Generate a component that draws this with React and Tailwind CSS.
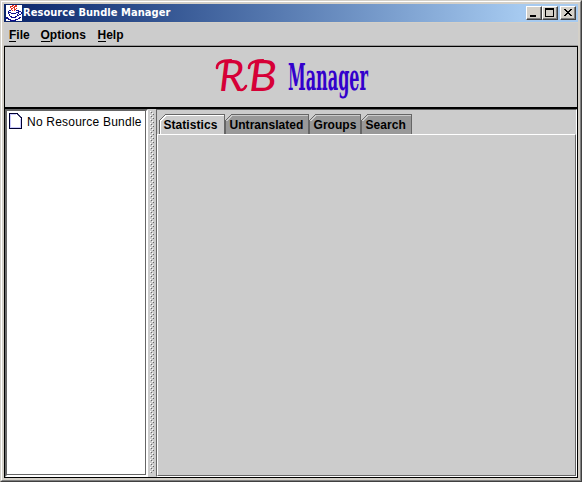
import React from "react";

const CUP = [
  "......rr.rr.....",
  "....rrr.rrr.....",
  "....r..rr.......",
  ".....rr.r.r.....",
  ".....r..rr......",
  "...bb.r.r.bbb...",
  "..b.........bbb.",
  "..bbb.....bbb..b",
  "..b..bbbbb..b..b",
  "...b.......b.bb.",
  "...b.......bb...",
  "....bb...bb.....",
  "bb...bbbbb...bb.",
  "bbb.........bb..",
  "..bbb....bbb....",
  "....bbbbbb......",
];

function CupIcon() {
  return (
    <svg width="16" height="16" shapeRendering="crispEdges" className="block shrink-0 bg-white">
      {CUP.flatMap((row, y) =>
        [...row].map((c, x) =>
          c === "." ? null : (
            <rect key={x + "-" + y} x={x} y={y} width="1" height="1" fill={c === "r" ? "#e03020" : "#10108c"} />
          )
        )
      )}
    </svg>
  );
}

function WinButton({ children }) {
  return (
    <div className="h-[14px] w-4 border border-t-white border-l-white border-r-[#404040] border-b-[#404040] bg-[#d4d0c8]">
      <div className="h-full w-full border-r border-b border-[#808080]">
        <svg width="13" height="11" shapeRendering="crispEdges" className="block" fill="none" stroke="#000">
          {children}
        </svg>
      </div>
    </div>
  );
}

function MenuItem({ label, className }) {
  return (
    <span className={"block h-[15px] whitespace-nowrap " + className}>
      <span className="inline-block h-[14px] border-b border-black">{label[0]}</span>
      {label.slice(1)}
    </span>
  );
}

function Tab({ label, active, className, size }) {
  return (
    <div className={"relative h-5 shrink-0 " + className}>
      <svg width={size} height="21" shapeRendering="crispEdges" className="absolute left-0 top-0 block">
        <path d={`M0 20V6L6 0H${size}V20Z`} fill={active ? "#cccccc" : "#999999"} />
        <path d={`M0.5 20V6.5L6.5 0.5H${size - 0.5}V20`} fill="none" stroke="#666666" />
        <path
          d={active ? `M1.5 21V7L7 1.5H${size - 1}` : `M1.5 7L7 1.5H${size - 1}`}
          fill="none"
          stroke={active ? "#ffffff" : "#cccccc"}
        />
      </svg>
      <span className="relative block whitespace-nowrap pl-[4.5px] pt-[2px] leading-[18px] tracking-[0.05px]">{label}</span>
    </div>
  );
}

export default function App() {
  return (
    <div className="h-[482px] w-[582px] overflow-hidden border border-t-[#d4d0c8] border-l-[#d4d0c8] border-r-[#404040] border-b-[#404040] font-['Liberation_Sans',Arial,sans-serif] text-black">
      <div className="flex h-full flex-col border border-t-white border-l-white border-r-[#808080] border-b-[#808080] bg-[#d4d0c8] p-[2px]">
        <div className="flex h-[18px] shrink-0 items-center bg-linear-to-r from-[#0a246a] to-[#a6caf0] to-90% pl-[2px] pr-[2px]">
          <CupIcon />
          <span className="ml-[1px] whitespace-nowrap font-['DejaVu_Sans_Condensed','DejaVu_Sans',sans-serif] text-[11px] font-bold leading-[18px] tracking-[0.05px] text-white">Resource Bundle Manager</span>
          <div className="ml-auto flex">
            <WinButton><path d="M3 9H9" strokeWidth="2" /></WinButton>
            <WinButton><path d="M2.5 1V9.5H10.5V1" /><path d="M2 2H11" strokeWidth="2" /></WinButton>
            <div className="w-[2px]" />
            <WinButton>
              <path d="M3 2h2v1h1v1h2v-1h1v-1h2v1h-1v1h-1v1h-1v1h1v1h1v1h1v1h-2v-1h-1v-1h-2v1h-1v1h-2v-1h1v-1h1v-1h1v-1h-1v-1h-1v-1h-1z" fill="#000" stroke="none" />
            </WinButton>
          </div>
        </div>
        <div className="mt-px flex h-[23px] shrink-0 border-b border-[#999999] bg-[#cccccc] pl-[5px] pt-[5px] text-[12px] font-bold leading-[14px]">
          <MenuItem label="File" className="w-[31.5px]" />
          <MenuItem label="Options" className="w-[57px]" />
          <MenuItem label="Help" className="w-[40px]" />
        </div>
        <div className="flex min-h-0 flex-1 flex-col border border-black bg-[#cccccc]">
          <div className="flex h-[62px] shrink-0 justify-center border-b-2 border-black">
            <svg width="170" height="60" className="block">
              <g fill="none" stroke="#d60036" strokeWidth="2.6" strokeLinecap="round">
                <path d="M11 21C11 16 15 13.500 25 13.400" />
                <path d="M43 21C43 16 47 13.500 57 13.400" />
                <path d="M35 43Q38 43 40 39" />
              </g>
              <text x="13" y="44" fill="#d60036" fontFamily="Lato" fontStyle="italic" fontSize="43" textLength="25" lengthAdjust="spacingAndGlyphs">R</text>
              <text x="43" y="44" fill="#d60036" fontFamily="Lato" fontStyle="italic" fontSize="43" textLength="28" lengthAdjust="spacingAndGlyphs">B</text>
              <text x="82" y="43" fill="#3300cc" fontFamily="DejaVu Serif" fontWeight="bold" fontSize="38" textLength="80" lengthAdjust="spacingAndGlyphs">Manager</text>
            </svg>
          </div>
          <div className="flex min-h-0 flex-1">
            <div className="w-[143px] shrink-0 border-2 border-t-[#666666] border-l-[#666666] border-r-white border-b-white">
              <div className="flex h-full items-start border-r border-b border-[#666666] bg-white pl-[2px] pt-[2px]">
                <svg width="13" height="16" shapeRendering="crispEdges" className="block shrink-0">
                  <path d="M0.5 0.5H8L12.5 5V15.5H0.5Z" fill="#fff" stroke="#000033" />
                  <path d="M1.5 15V1.5H7M11.5 6V14.5H1" fill="none" stroke="#ccccff" />
                  <path d="M7 1L12 6V4L9 1Z" fill="#333366" />
                </svg>
                <span className="ml-[5px] whitespace-nowrap pt-px text-[12px] leading-4 tracking-[0.22px]">No Resource Bundle</span>
              </div>
            </div>
            <svg width="8" height="100%" shapeRendering="crispEdges" className="block shrink-0">
              <defs>
                <pattern id="bumps" x="2" y="2" width="4" height="4" patternUnits="userSpaceOnUse">
                  <path d="M0 0h1v1h-1zM2 2h1v1h-1z" fill="#fff" />
                  <path d="M1 1h1v1h-1zM3 3h1v1h-1z" fill="#666" />
                </pattern>
              </defs>
              <rect x="2" y="2" width="4" height="362" fill="url(#bumps)" />
            </svg>
            <div className="flex min-w-0 flex-1 flex-col border border-t-[#666666] border-l-[#666666] border-r-white border-b-white pt-1">
              <div className="flex h-5 shrink-0 pl-[2px] text-[12px] font-bold">
                <Tab label="Statistics" active className="w-[66px]" size={66} />
                <Tab label="Untranslated" className="w-[84px]" size={84} />
                <Tab label="Groups" className="w-[52px]" size={52} />
                <Tab label="Search" className="w-[51px]" size={51} />
              </div>
              <div className="flex-1 border border-t-white border-l-white border-r-[#666666] border-b-[#666666]" />
            </div>
          </div>
        </div>
      </div>
    </div>
  );
}
